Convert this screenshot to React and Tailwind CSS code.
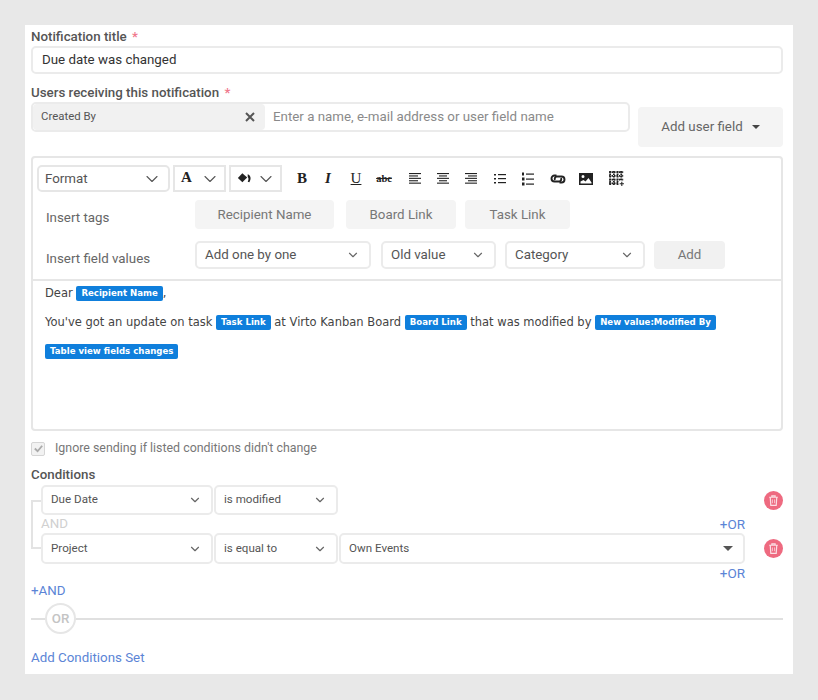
import { ChevronDown } from "lucide-react";

function Select({ label, className = "", small = false }) {
    return (
        <div className={`flex items-center justify-between rounded-[5px] border-2 border-[#ebebeb] bg-white ${small ? "pr-[9px] pl-[8px] text-[11.6px]" : "pr-[9px] pl-[8px] text-[13.33px]"} text-[#555] ${className}`}>
            <span>{label}</span>
            <ChevronDown size={14} strokeWidth={2} className="text-[#666]" />
        </div>
    );
}

function Chip({ children }) {
    return (
        <span className="inline-block h-[15px] rounded-[2px] bg-[#0f7fdc] px-[5px] align-middle font-['DejaVu_Sans',sans-serif] text-[8.6px] leading-[15px] font-bold text-white">
            {children}
        </span>
    );
}

function TagButton({ children, className = "" }) {
    return (
        <div className={`flex h-[29px] items-center justify-center rounded-[4px] bg-[#f4f4f4] text-[13.33px] text-[#777] ${className}`}>
            {children}
        </div>
    );
}

function ToolIcon({ children, className = "" }) {
    return (
        <svg viewBox="0 0 16 16" className={`h-[16px] w-[16px] text-[#222] ${className}`} fill="currentColor">
            {children}
        </svg>
    );
}

function Lines({ rows }) {
    return rows.map(([x, w], i) => <rect key={i} x={x} y={2 + i * 2.4} width={w} height="1.1" />);
}

function Toolbar() {
    return (
        <div className="flex h-[27px] items-center pl-[4px]">
            <div className="flex h-full w-[133px] items-center justify-between rounded-[5px] border-2 border-[#e6e6e6] pr-[6px] pl-[6px] text-[13.33px] text-[#555]">
                Format
                <ChevronDown size={20} strokeWidth={1.3} className="text-[#555]" />
            </div>
            <div className="ml-[3px] flex h-full w-[53px] items-center justify-between border-2 border-[#e6e6e6] pr-[4px] pl-[6px]">
                <span className="pb-[3px] font-['Liberation_Serif',serif] text-[15px] font-bold text-[#222]">A</span>
                <ChevronDown size={20} strokeWidth={1.3} className="text-[#555]" />
            </div>
            <div className="ml-[3px] flex h-full w-[53px] items-center justify-between border-2 border-[#e6e6e6] pr-[4px] pl-[6px]">
                <svg viewBox="0 0 14 12" className="h-[13px] w-[15px] text-[#222]" fill="currentColor">
                    <path d="M5 1 9.500 5 5 9.500.8 5.500Z" />
                    <path d="M10 2c3 1 3.500 4.500 1.500 7.500l-1.500-.5c1-2 1-3.500 0-4.500Z" />
                </svg>
                <ChevronDown size={20} strokeWidth={1.3} className="text-[#555]" />
            </div>
            <div className="ml-[12px] flex w-[16px] justify-center font-['Liberation_Serif',serif] text-[15px] font-bold text-[#222]">B</div>
            <div className="ml-[10px] flex w-[16px] justify-center font-['Liberation_Serif',serif] text-[15px] font-bold text-[#222] italic">I</div>
            <div className="ml-[12px] flex w-[16px] justify-center font-['Liberation_Serif',serif] text-[15px] text-[#222] underline">U</div>
            <div className="ml-[12px] flex w-[16px] justify-center font-['Liberation_Serif',serif] text-[10.5px] font-bold text-[#222] line-through">abc</div>
            <ToolIcon className="ml-[15px]"><Lines rows={[[2, 12], [2, 9], [2, 12], [2, 9], [2, 12]]} /></ToolIcon>
            <ToolIcon className="ml-[12px]"><Lines rows={[[2, 12], [4, 8], [2, 12], [4, 8], [2, 12]]} /></ToolIcon>
            <ToolIcon className="ml-[12px]"><Lines rows={[[2, 12], [5, 9], [2, 12], [5, 9], [2, 12]]} /></ToolIcon>
            <ToolIcon className="ml-[13px]">
                <rect x="2" y="3" width="2" height="1.500" /><rect x="2" y="7" width="2" height="1.500" /><rect x="2" y="11" width="2" height="1.500" />
                <rect x="6" y="3" width="8" height="1.200" /><rect x="6" y="7" width="8" height="1.200" /><rect x="6" y="11" width="8" height="1.200" />
            </ToolIcon>
            <ToolIcon className="ml-[12px]">
                <rect x="2" y="1.500" width="2" height="3" /><rect x="2" y="6.500" width="2.500" height="3" /><rect x="2" y="11.500" width="2.500" height="3" />
                <rect x="6" y="2.500" width="8" height="1.200" /><rect x="6" y="7.500" width="8" height="1.200" /><rect x="6" y="12.500" width="8" height="1.200" />
            </ToolIcon>
            <svg viewBox="0 0 16 16" className="ml-[14px] h-[16px] w-[16px] text-[#222]" fill="none" stroke="currentColor" strokeWidth="1.900">
                <path d="M6.500 4.500H4.500a3 3 0 0 0 0 6H9.500a2.500 2.500 0 0 0 1.500-3.500" />
                <path d="M9.500 11.500h2a3 3 0 0 0 0-6H6.500a2.500 2.500 0 0 0-1.500 3.500" />
            </svg>
            <ToolIcon className="ml-[12px]">
                <path fillRule="evenodd" d="M1 2h14v12H1Zm1.500 8.500V12.500h11v-1L10.500 7 7.500 10.500 5.500 9ZM5 4a1.500 1.500 0 1 0 0 3 1.500 1.500 0 0 0 0-3Z" />
            </ToolIcon>
            <svg viewBox="0 0 16 16" className="ml-[14px] h-[17px] w-[17px] text-[#222]" fill="none" stroke="currentColor" strokeWidth="1.700" strokeDasharray="1.500 .8">
                <path d="M1 2h14M1 5.500h14M1 9h14M1 12.500h9M2 1v13M5.500 1v13M9 1v13M12.500 1v9" />
                <path d="M13 11v4M11 13h4" strokeDasharray="none" strokeWidth="1" />
            </svg>
        </div>
    );
}

function Trash({ className = "" }) {
    return (
        <div className={`flex h-[19px] w-[19px] items-center justify-center rounded-full bg-[#ee6a80] ${className}`}>
            <svg viewBox="0 0 12 12" className="h-[13px] w-[13px]" fill="none" stroke="#fbdfe4" strokeWidth="1.100">
                <path d="M2 3h8M4.500 3V1.700h3V3M3 3l.5 7.500h5L9 3" />
                <path d="M5 5v3.500M7 5v3.500" strokeWidth=".7" />
            </svg>
        </div>
    );
}

export default function App() {
    return (
        <div className="h-[700px] bg-[#e8e8e8] pt-[25px] pl-[25px] font-['Roboto',sans-serif]">
            <div className="h-[649px] w-[768px] bg-white pt-[4px] pr-[10px] pl-[6px]">
                <div className="text-[13.33px] leading-[16px] font-medium text-[#555]">
                    Notification title <span className="ml-[2px] text-[#f0788c]">*</span>
                </div>
                <div className="mt-[1px] flex h-[28px] items-center rounded-[5px] border-2 border-[#ebebeb] pl-[9px] text-[13.33px] text-[#333]">
                    Due date was changed
                </div>
                <div className="mt-[11px] text-[13.33px] leading-[16px] font-medium text-[#555]">
                    Users receiving this notification <span className="ml-[2px] text-[#f0788c]">*</span>
                </div>
                <div className="flex items-start">
                    <div className="mt-[1px] flex h-[30px] w-[599px] items-stretch rounded-[5px] border-2 border-[#ebebeb]">
                        <div className="flex w-[232px] items-center justify-between rounded-[4px] bg-[#f1f1f1] pr-[10px] pl-[8px] text-[11.4px] text-[#555]">
                            Created By
                            <svg viewBox="0 0 10 10" className="h-[10px] w-[10px]" stroke="#555" strokeWidth="2">
                                <path d="M1 1l8 8M9 1l-8 8" />
                            </svg>
                        </div>
                        <div className="flex items-center pl-[8px] text-[13.33px] text-[#8a8a8a]">Enter a name, e-mail address or user field name</div>
                    </div>
                    <div className="mt-[6px] ml-[8px] flex h-[40px] w-[145px] items-center justify-center rounded-[4px] bg-[#f4f4f4] text-[13.33px] text-[#666]">
                        Add user field
                        <span className="ml-[9px] h-0 w-0 border-x-[4px] border-t-[4px] border-x-transparent border-t-[#444]"></span>
                    </div>
                </div>
                <div className="mt-[9px] h-[275px] rounded-[4px] border-2 border-[#e6e6e6]">
                    <div className="h-[123px] border-b-2 border-[#e6e6e6] pt-[7px]">
                        <Toolbar />
                        <div className="mt-[8px] flex items-center">
                            <div className="w-[162px] pt-[7px] pl-[13px] text-[13.33px] text-[#666]">Insert tags</div>
                            <TagButton className="w-[139px]">Recipient Name</TagButton>
                            <TagButton className="ml-[12px] w-[110px]">Board Link</TagButton>
                            <TagButton className="ml-[9px] w-[105px]">Task Link</TagButton>
                        </div>
                        <div className="mt-[12px] flex items-center">
                            <div className="w-[162px] pt-[8px] pl-[13px] text-[13.33px] text-[#666]">Insert field values</div>
                            <Select label="Add one by one" className="h-[28px] w-[176px]" />
                            <Select label="Old value" className="ml-[10px] h-[28px] w-[115px]" />
                            <Select label="Category" className="ml-[9px] h-[28px] w-[140px]" />
                            <div className="ml-[9px] flex h-[28px] w-[71px] items-center justify-center rounded-[4px] bg-[#f1f1f1] text-[13.33px] text-[#777]">Add</div>
                        </div>
                    </div>
                    <div className="pl-[12px] font-['DejaVu_Sans',sans-serif] text-[11.5px] text-[#444]">
                        <p className="pt-[4px] leading-[17px]">Dear <Chip>Recipient Name</Chip>,</p>
                        <p className="mt-[12px] leading-[17px]">
                            You've got an update on task <Chip>Task Link</Chip> at Virto Kanban Board <Chip>Board Link</Chip> that was modified by <Chip>New value:Modified By</Chip>
                        </p>
                        <p className="mt-[12px] leading-[17px]"><Chip>Table view fields changes</Chip></p>
                    </div>
                </div>
                <div className="mt-[10px] flex h-[15px] items-center text-[12.4px] text-[#777]">
                    <div className="flex h-[14px] w-[14px] items-center justify-center rounded-[2px] border border-[#d5d5d5] bg-[#f2f2f2]">
                        <svg viewBox="0 0 12 12" className="h-[11px] w-[11px]" fill="none" stroke="#aaa" strokeWidth="2">
                            <path d="M2 6l3 3 5-6" />
                        </svg>
                    </div>
                    <span className="ml-[10px]">Ignore sending if listed conditions didn't change</span>
                </div>
                <div className="mt-[11px] text-[13.33px] leading-[16px] font-medium text-[#555]">Conditions</div>
                <div className="relative mt-[2px] pl-[10px]">
                    <div className="absolute top-[15px] left-0 h-[49px] w-[10px] border-y-2 border-l-2 border-[#e3e3e3]"></div>
                    <div className="flex items-center">
                        <Select small label="Due Date" className="h-[30px] w-[172px]" />
                        <Select small label="is modified" className="ml-[1px] h-[30px] w-[124px]" />
                        <Trash className="ml-auto" />
                    </div>
                    <div className="flex h-[18px] w-[704px] items-center justify-between">
                        <span className="text-[13.33px] text-[#d0d0d0]">AND</span>
                        <span className="text-[13.5px] text-[#5b84d6]">+OR</span>
                    </div>
                    <div className="flex items-center">
                        <Select small label="Project" className="h-[31px] w-[172px]" />
                        <Select small label="is equal to" className="ml-[1px] h-[31px] w-[124px]" />
                        <div className="ml-[1px] flex h-[31px] w-[406px] items-center justify-between rounded-[5px] border-2 border-[#ebebeb] pr-[10px] pl-[8px] text-[11.6px] text-[#555]">
                            Own Events
                            <span className="h-0 w-0 border-x-[5px] border-t-[5px] border-x-transparent border-t-[#555]"></span>
                        </div>
                        <Trash className="ml-auto" />
                    </div>
                    <div className="flex h-[18px] w-[704px] items-center justify-end text-[13.5px] text-[#5b84d6]">+OR</div>
                </div>
                <div className="mt-[1px] text-[13.33px] leading-[16px] text-[#5b84d6]">+AND</div>
                <div className="relative mt-[4px] flex h-[31px] items-center">
                    <div className="h-[2px] w-full bg-[#e0e0e0]"></div>
                    <div className="absolute top-0 left-[14px] flex h-[31px] w-[31px] items-center justify-center rounded-full border-2 border-[#e6e6e6] bg-white text-[13.33px] font-medium text-[#c4c4c4]">OR</div>
                </div>
                <div className="mt-[16px] text-[13.33px] leading-[16px] text-[#5b84d6]">Add Conditions Set</div>
            </div>
        </div>
    );
}
